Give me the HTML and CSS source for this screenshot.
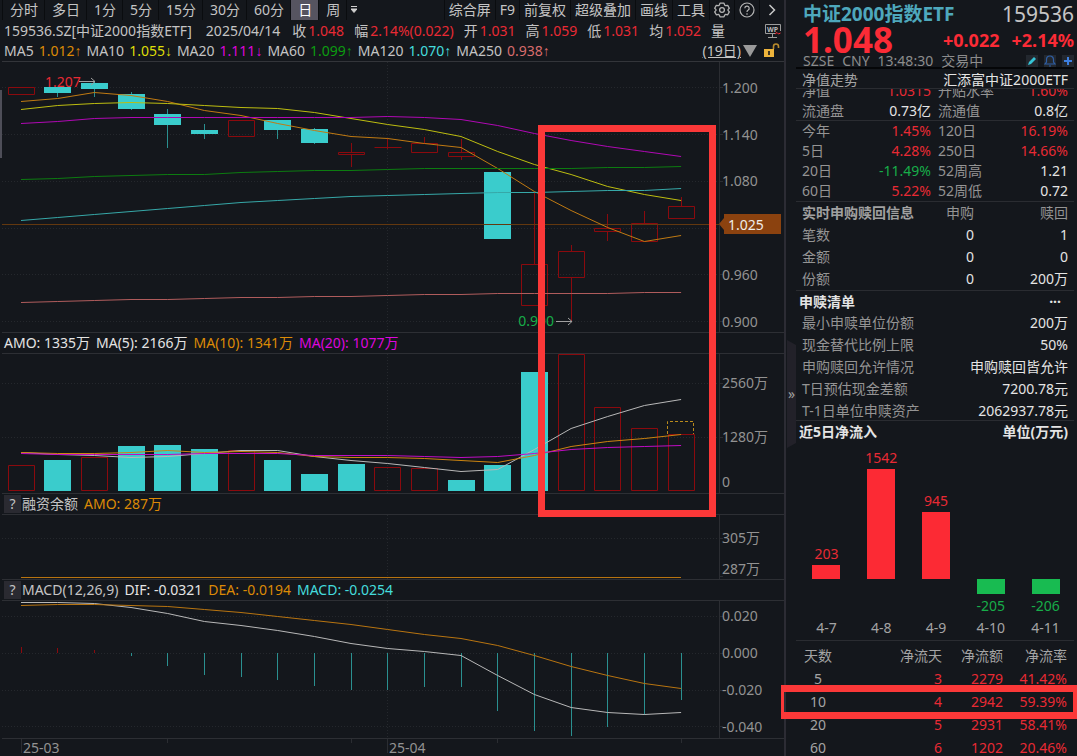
FILE: index.html
```html
<!DOCTYPE html>
<html lang="zh-CN">
  <head>
    <meta charset="UTF-8" />
    <meta name="viewport" content="width=device-width, initial-scale=1.0" />
    <title>159536.SZ 中证2000指数ETF</title>
    <link rel="stylesheet" href="styles.css">
  </head>
  <body>
    <div class="app">
      <main class="board">
        <nav class="toolbar">
          <button class="tab">分时</button>
          <button class="tab">多日</button>
          <button class="tab">1分</button>
          <button class="tab">5分</button>
          <button class="tab">15分</button>
          <button class="tab">30分</button>
          <button class="tab">60分</button>
          <button class="tab active">日</button>
          <button class="tab">周</button>
          <button class="tab more" aria-label="更多周期">
            <svg width="6" height="8" viewBox="0 0 6 8"><path d="M0 0.5h6M0 3h6L3 6.5z" fill="#d0d0d0" stroke="#d0d0d0" stroke-width="1" /></svg>
          </button>
          <div class="tools">
            <button class="tool">综合屏</button>
            <button class="tool">F9</button>
            <button class="tool">前复权</button>
            <button class="tool">超级叠加</button>
            <button class="tool">画线</button>
            <button class="tool">工具</button>
            <button class="tool icon" aria-label="设置">
              <svg width="16" height="16" viewBox="0 0 16 16" fill="none" stroke="#b4b4b4" stroke-width="1.3" stroke-linejoin="round">
                <path d="M6 1.2h4l.7 1.9 1 .6 2-.4 1.6 3L14 7.6v.8l1.3 1.5-1.6 2.9-2-.4-1 .6L10 14.8H6L5.3 13l-1-.6-2 .4L.7 9.9 2 8.4v-.8L.7 6.3l1.6-3 2 .4 1-.6z" />
                <circle cx="8" cy="8" r="2.4" />
              </svg>
            </button>
            <button class="tool icon" aria-label="帮助">
              <svg width="16" height="16" viewBox="0 0 16 16" fill="none" stroke="#b4b4b4" stroke-width="1.2">
                <circle cx="8" cy="8" r="7" />
                <path d="M5.8 6.3a2.2 2.2 0 1 1 3.2 2c-.8.4-1 .8-1 1.6M8 11.2v1.5" />
              </svg>
            </button>
            <button class="tool icon" aria-label="展开">
              <svg width="8" height="12" viewBox="0 0 8 12" fill="none" stroke="#c8c8c8" stroke-width="1.5"><path d="M1.5 1l5 5-5 5" /></svg>
            </button>
          </div>
        </nav>

        <div class="quote-line">
          <span class="code">159536.SZ[中证2000指数ETF]</span>
          <span class="date">2025/04/14</span>
          <span>收<b class="up">1.048</b></span>
          <span>幅<b class="up">2.14%(0.022)</b></span>
          <span>开<b class="up">1.031</b></span>
          <span>高<b class="up">1.059</b></span>
          <span>低<b class="up">1.031</b></span>
          <span>均<b class="up">1.052</b></span>
          <span>量</span>
          <svg class="wp" width="18" height="16" viewBox="0 0 18 16" fill="none" stroke="#9c9c9c">
            <path d="M16.500 8V1.500h-15v9h10" />
            <path d="M8.500 11v3M4 14.500h9" />
            <path d="M11 11l2-1.500 1.500 1.500 2-1" stroke="#fb2b36" />
            <text x="3" y="9" class="wp-text">WP</text>
          </svg>
        </div>

        <div class="ma-line">
          <span>MA5</span><span class="orange">1.012↑</span>
          <span>MA10</span><span class="yellow">1.055↓</span>
          <span>MA20</span><span class="magenta">1.111↓</span>
          <span>MA60</span><span class="green">1.099↑</span>
          <span>MA120</span><span class="cyan">1.070↑</span>
          <span>MA250</span><span class="pink">0.938↑</span>
          <div class="range">
            <a href="#">(19日)</a>
            <svg width="14" height="12" viewBox="0 0 14 12"><path d="M0 0h14L7 12z" fill="#9a9a9a" /></svg>
            <svg class="lock" width="17" height="16" viewBox="0 0 17 16">
              <rect x="1" y="6" width="10" height="8" fill="#edb43c" />
              <path d="M10.500 6V3.500a2.500 2.500 0 0 1 5 0V5" fill="none" stroke="#b98b2c" stroke-width="1.6" />
              <path d="M6 8v4" stroke="#14171c" stroke-width="1.6" />
            </svg>
          </div>
        </div>

        <div class="charts">
          <section class="pane">
            <div class="plot">
              <svg id="price" class="price" viewBox="2 62 717 270" preserveAspectRatio="none"></svg>
              <span class="note high">1.207</span>
              <span class="note low">0.900</span>
            </div>
            <svg class="axis price" viewBox="719 62 65 270">
              <path class="edge" d="M719.5 62v270M719 87.5h4M719 134.5h4M719 181.5h4M719 274.5h4M719 321.5h4" />
              <text x="722" y="93">1.200</text>
              <text x="722" y="140">1.140</text>
              <text x="722" y="186">1.080</text>
              <text x="722" y="280">0.960</text>
              <text x="722" y="327">0.900</text>
              <path class="tag" d="M719 224l5-6v-4h57v20h-57v-4z" />
              <text x="728" y="230" class="tag-text">1.025</text>
            </svg>
          </section>

          <header class="pane-head">
            <span class="white">AMO: 1335万</span>
            <span class="white">MA(5): 2166万</span>
            <span class="orange">MA(10): 1341万</span>
            <span class="magenta">MA(20): 1077万</span>
          </header>
          <section class="pane">
            <div class="plot">
              <svg id="volume" class="volume" viewBox="2 354 717 139" preserveAspectRatio="none"></svg>
            </div>
            <svg class="axis volume" viewBox="719 354 65 139">
              <path class="edge" d="M719.5 354v139M719 383.5h4M719 437.5h4" />
              <text x="722" y="388">2560万</text>
              <text x="722" y="442">1280万</text>
              <text x="722" y="487">0</text>
            </svg>
          </section>

          <header class="pane-head">
            <button class="help">?</button>
            <span>融资余额</span>
            <span class="orange">AMO: 287万</span>
          </header>
          <section class="pane">
            <div class="plot">
              <svg id="margin" class="margin" viewBox="2 515 717 64" preserveAspectRatio="none"></svg>
            </div>
            <svg class="axis margin" viewBox="719 515 65 64">
              <path class="edge" d="M719.5 515v64M719 538.5h4M719 576.5h4" />
              <text x="722" y="543">305万</text>
              <text x="722" y="574">287万</text>
            </svg>
          </section>

          <header class="pane-head">
            <button class="help">?</button>
            <span>MACD(12,26,9)</span>
            <span class="white">DIF: -0.0321</span>
            <span class="orange">DEA: -0.0194</span>
            <span class="cyan">MACD: -0.0254</span>
          </header>
          <section class="pane">
            <div class="plot">
              <svg id="macd" class="macd" viewBox="2 601 717 137" preserveAspectRatio="none"></svg>
            </div>
            <svg class="axis macd" viewBox="719 601 65 137">
              <path class="edge" d="M719.5 601v137M719 616.5h4M719 653.5h4M719 690.5h4M719 726.5h4" />
              <text x="722" y="621">0.020</text>
              <text x="722" y="658">0.000</text>
              <text x="722" y="695">-0.020</text>
              <text x="722" y="732">-0.040</text>
            </svg>
          </section>

          <footer class="time-axis">
            <svg class="ticks" viewBox="2 0 717 17" preserveAspectRatio="none">
              <path class="edge" d="M21.5 0v14M167.5 0v4M351.5 0v4M387.5 0v14M497.5 0v4M681.5 0v4" />
            </svg>
            <span class="month march">25-03</span>
            <span class="month april">25-04</span>
          </footer>

          <div class="mark mark-chart"></div>
        </div>
      </main>

      <aside class="side">
        <button class="collapse" aria-label="收起">»</button>

        <header class="summary">
          <div class="summary-row">
            <h1>中证2000指数ETF</h1>
            <span class="symbol">159536</span>
          </div>
          <div class="summary-row last-row">
            <strong class="last">1.048</strong>
            <span class="change"><b>+0.022</b><b>+2.14%</b></span>
          </div>
          <div class="status">
            <span>SZSE</span><span>CNY</span><span>13:48:30</span><span>交易中</span>
            <div class="status-icons">
              <button aria-label="编辑"><svg width="12" height="12" viewBox="0 0 12 12"><path d="M2 10l1-3 5-5 2 2-5 5z" fill="#35c3d6" /></svg></button>
              <button aria-label="提醒"><svg width="12" height="12" viewBox="0 0 12 12" fill="none" stroke="#2f5fa6" stroke-width="1.2"><path d="M1 9h10L9.500 7V4.500a3.500 3.500 0 0 0-7 0V7zM5 11h2" /></svg></button>
              <button aria-label="添加"><svg width="12" height="12" viewBox="0 0 12 12"><path d="M6 2v8M2 6h8" stroke="#3d7fe0" stroke-width="2" /></svg></button>
            </div>
          </div>
        </header>

        <div class="fund-line"><span>净值走势</span><span class="white">汇添富中证2000ETF</span></div>

        <div class="stats stats-clip">
          <div class="stat"><span>净值</span><b class="up">1.0315</b><span>升贴水率</span><b class="up">1.60%</b></div>
          <div class="stat"><span>流通盘</span><b>0.73亿</b><span>流通值</span><b>0.8亿</b></div>
        </div>
        <div class="stats">
          <div class="stat"><span>今年</span><b class="up">1.45%</b><span>120日</span><b class="up">16.19%</b></div>
          <div class="stat"><span>5日</span><b class="up">4.28%</b><span>250日</span><b class="up">14.66%</b></div>
          <div class="stat"><span>20日</span><b class="down">-11.49%</b><span>52周高</span><b>1.21</b></div>
          <div class="stat"><span>60日</span><b class="up">5.22%</b><span>52周低</span><b>0.72</b></div>
        </div>

        <table class="orders">
          <thead>
            <tr><th>实时申购赎回信息</th><td>申购</td><td>赎回</td></tr>
          </thead>
          <tbody>
            <tr><td>笔数</td><td>0</td><td>1</td></tr>
            <tr><td>金额</td><td>0</td><td>0</td></tr>
            <tr><td>份额</td><td>0</td><td>200万</td></tr>
          </tbody>
        </table>

        <section class="list">
          <h2>申赎清单 <button class="dots" aria-label="更多">···</button></h2>
          <dl>
            <div><dt>最小申赎单位份额</dt><dd>200万</dd></div>
            <div><dt>现金替代比例上限</dt><dd>50%</dd></div>
            <div><dt>申购赎回允许情况</dt><dd>申购赎回皆允许</dd></div>
            <div><dt>T日预估现金差额</dt><dd>7200.78元</dd></div>
            <div><dt>T-1日单位申赎资产</dt><dd>2062937.78元</dd></div>
          </dl>
        </section>

        <section class="flow">
          <h2>近5日净流入 <span>单位(万元)</span></h2>
          <div class="bars" id="bars"></div>
        </section>

        <table class="flow-table">
          <thead>
            <tr><th>天数</th><th>净流天</th><th>净流额</th><th>净流率</th></tr>
          </thead>
          <tbody>
            <tr><td>5</td><td>3</td><td>2279</td><td>41.42%</td></tr>
            <tr class="marked"><td>10<div class="mark mark-row"></div></td><td>4</td><td>2942</td><td>59.39%</td></tr>
            <tr><td>20</td><td>5</td><td>2931</td><td>58.41%</td></tr>
            <tr><td>60</td><td>6</td><td>1202</td><td>20.46%</td></tr>
          </tbody>
        </table>
      </aside>
    </div>

    <script src="chart.js"></script>
  </body>
</html>
```
FILE: styles.css
```css
* {
  box-sizing: border-box;
}

body {
  margin: 0;
  background-color: #14171c;
  color: #c4c4c4;
  font-family: 'Noto Sans', 'Liberation Sans', 'Noto Sans CJK SC', sans-serif;
  font-size: 14px;
  line-height: 20px;
}

button {
  padding: 0;
  border: none;
  background: none;
  color: inherit;
  font: inherit;
  cursor: pointer;
}

b {
  font-weight: 400;
}

svg {
  display: block;
}

h1,
h2,
dl,
dd {
  margin: 0;
}

.white { color: #e4e4e4; }
.orange { color: #dc8a06; }
.yellow { color: #dede08; }
.magenta { color: #dd06dd; }
.green { color: #0c9c10; }
.cyan { color: #44dcdc; }
.pink { color: #d86c6c; }
.up { color: #e82a34; }
.down { color: #17ad49; }

.app {
  display: grid;
  grid-template-columns: minmax(0, 1fr) 291px;
  height: 100vh;
  min-height: 756px;
  overflow: hidden;
}

/* Left board */
.board {
  padding-left: 2px;
  border-right: 2px solid #2c2c34;
  background: linear-gradient(#4e4e58, #4e4e58) 0 90px / 2px 68px no-repeat;
  min-width: 0;
}

.toolbar {
  display: flex;
  height: 20px;
  overflow: hidden;
}

.tab {
  padding: 0 7px;
  border-left: 1px solid #0a0c0f;
  margin-right: -1px;
  flex: none;
}

.tab.active {
  background-color: #565460;
  color: #fff;
}

.tab.more {
  padding: 0 4px;
}

.tools {
  display: flex;
  margin-left: auto;
}

.tool {
  padding: 0 4px;
  border-left: 1px solid #0a0c0f;
  white-space: nowrap;
}

.tool.icon {
  display: flex;
  align-items: center;
  justify-content: center;
  width: 25px;
}

.quote-line {
  display: flex;
  align-items: center;
  gap: 10px;
  height: 21px;
  padding-left: 2px;
  white-space: nowrap;
}

.quote-line span {
  display: flex;
  gap: 2px;
}

.quote-line .code {
  margin-right: 4px;
}

.quote-line .date {
  margin-right: 2px;
}

.quote-line .wp {
  margin-left: auto;
  margin-right: 2px;
}

.wp-text {
  font-size: 7px;
  font-weight: 700;
  fill: #b8b8b8;
  stroke: none;
}

.ma-line {
  display: flex;
  align-items: center;
  gap: 5px;
  height: 21px;
  padding-left: 2px;
  border-bottom: 1px solid #33353a;
  white-space: nowrap;
}

.range {
  display: flex;
  align-items: center;
  gap: 2px;
  margin-left: auto;
  padding-right: 4px;
}

.range a {
  color: inherit;
}

.range .lock {
  margin-left: 4px;
}

.charts {
  position: relative;
}

.pane {
  display: grid;
  grid-template-columns: minmax(0, 1fr) 65px;
}

.plot {
  position: relative;
}

.plot svg {
  width: 100%;
}

.price { height: 270px; }
.volume { height: 139px; }
.margin { height: 64px; }
.macd { height: 137px; }

.axis {
  width: 65px;
}

.axis text {
  fill: #929292;
}

.edge {
  fill: none;
  stroke: #2b2d32;
}

.axis .tag {
  fill: #8b420f;
}

.axis .tag-text {
  fill: #f0ece8;
}

.plot path,
.plot line,
.plot rect {
  vector-effect: non-scaling-stroke;
}

.grid {
  fill: none;
  stroke: #25282d;
  stroke-dasharray: 1 2;
}

.series {
  fill: none;
  stroke-width: 1;
}

.rise {
  fill: none;
  stroke: #8b0a0e;
}

.fall {
  fill: #3acccc;
}

.wick-fall {
  stroke: #2a9090;
}

.estimate {
  fill: none;
  stroke: #b88a1c;
  stroke-dasharray: 3 2;
}

.arrow {
  fill: none;
  stroke: #a0a0a0;
}

.note {
  position: absolute;
}

.note.high {
  top: 10px;
  left: 6%;
  color: #e82a34;
}

.note.low {
  top: 249px;
  right: 23%;
  color: #17ad49;
}

.pane-head {
  display: flex;
  align-items: center;
  gap: 6px;
  height: 22px;
  padding-left: 2px;
  border: solid #2d2f34;
  border-width: 1px 0;
  white-space: nowrap;
}

.help {
  width: 17px;
  height: 18px;
  margin-right: -5px;
  background-color: #2a2a31;
  line-height: 18px;
}

.time-axis {
  position: relative;
  height: 18px;
  padding-right: 65px;
  border-top: 1px solid #2d2f34;
}

.ticks {
  width: 100%;
  height: 17px;
}

.month {
  position: absolute;
  top: 1px;
  color: #929292;
  line-height: 16px;
}

.month.march { left: 21px; }
.month.april { left: 49.5%; }

.mark {
  position: absolute;
  border: 7px solid #fb3838;
  pointer-events: none;
}

.mark-chart {
  top: 63px;
  left: 68.5%;
  right: 68px;
  height: 392px;
}

/* Right panel */
.side {
  position: relative;
  min-width: 0;
  padding: 0 3px 0 10px;
}

.collapse {
  position: absolute;
  top: 340px;
  left: 1px;
  width: 9px;
  height: 108px;
  background-color: #222129;
  clip-path: polygon(0 0, 100% 5px, 100% 103px, 0 100%);
  color: #a0a0a0;
}

.summary {
  height: 69px;
  padding-left: 7px;
  border-bottom: 2px solid #050608;
}

.summary-row {
  display: flex;
  justify-content: space-between;
  align-items: center;
  height: 28px;
}

h1 {
  color: #4ea8bc;
  font-size: 19px;
  font-weight: 700;
}

.symbol {
  font-size: 21px;
}

.last-row {
  height: 24px;
  color: #fb2b36;
}

.last {
  font-size: 35px;
  font-weight: 700;
}

.change {
  display: flex;
  gap: 12px;
  font-size: 18px;
}

.change b {
  font-weight: 700;
}

.status {
  display: flex;
  gap: 8px;
  height: 17px;
  align-items: center;
  color: #8c8c8c;
}

.status-icons {
  display: flex;
  gap: 6px;
  margin-left: auto;
}

.status-icons button {
  background-color: #23282f;
}

.fund-line {
  display: flex;
  justify-content: space-between;
  height: 20px;
  padding: 0 6px;
  border-bottom: 1px solid #2a2c31;
  color: #a4a4a4;
  line-height: 22px;
}

.stats {
  padding: 0 6px;
  border-bottom: 1px solid #2a2c31;
}

/* list is scrolled part of a row down */
.stats-clip {
  display: flex;
  flex-direction: column;
  justify-content: flex-end;
  height: 32px;
  line-height: 22px;
  overflow: hidden;
}

.stat {
  display: grid;
  grid-template-columns: 1fr 1fr 1fr 1fr;
  flex: none;
  height: 20px;
  color: #949494;
}

.stat span {
  white-space: nowrap;
}

.stat b {
  text-align: right;
}

.stat b:nth-child(2) {
  margin-right: 4px;
}

.stat span:nth-child(3) {
  margin-left: 3px;
}

.stat b:not(.up):not(.down) {
  color: #e4e4e4;
}

table {
  width: 100%;
  border-collapse: collapse;
}

th,
td {
  padding: 0;
  text-align: right;
}

.orders {
  border-bottom: 1px solid #2a2c31;
  table-layout: fixed;
}

.orders tr {
  height: 22px;
}

.orders td,
.orders th {
  color: #e4e4e4;
}

.orders thead td,
.orders td:first-child {
  color: #949494;
}

.orders th {
  width: 122px;
  color: #a0a0a0;
  font-weight: 700;
}

.orders tr > :first-child {
  padding-left: 6px;
  text-align: left;
}

.orders tr > :nth-child(2) {
  width: 56px;
}

.orders tr > :last-child {
  padding-right: 6px;
}

h2 {
  display: flex;
  justify-content: space-between;
  height: 21px;
  padding: 0 6px 0 3px;
  color: #e4e4e4;
  font-size: 14px;
  font-weight: 700;
  line-height: 22px;
}

.dots {
  margin-right: 7px;
}

.list dl {
  height: 109px;
  border-bottom: 1px solid #2a2c31;
}

.list dl div {
  display: flex;
  justify-content: space-between;
  height: 22px;
  padding: 0 6px;
  line-height: 22px;
}

.list dt {
  color: #949494;
}

.list dd {
  color: #e4e4e4;
}

.bars {
  display: grid;
  grid-template-columns: repeat(5, 1fr);
  border-bottom: 1px solid #2a2c31;
  padding: 0 1px 0 3px;
}

.bar-col {
  display: grid;
  grid-template-rows: 137px 39px 22px;
  justify-items: center;
  color: #a4a4a4;
}

.bar-up {
  align-self: end;
}

.bar-fill {
  width: 28px;
  margin: 0 auto;
}

.bar-up .bar-fill {
  background-color: #fc2a34;
}

.bar-down .bar-fill {
  background-color: #18bb51;
}

.bar-value {
  text-align: center;
}

.bar-up .bar-value {
  margin-bottom: 1px;
}

.bar-down .bar-value {
  margin-top: 2px;
}

.flow-table {
  margin-top: 4px;
  line-height: 16px;
}

.flow-table tr {
  height: 23px;
}

.flow-table th {
  color: #a4a4a4;
  font-weight: 400;
}

.flow-table td {
  color: #e82a34;
}

.flow-table tr > :first-child {
  width: 44px;
  color: #a4a4a4;
  text-align: center;
}

.flow-table tr > :nth-child(3) {
  width: 61px;
}

.flow-table tr > :last-child {
  width: 71px;
  padding-right: 7px;
}

.marked {
  position: relative;
}

.mark-row {
  top: -6px;
  left: -15px;
  right: -3px;
  height: 34px;
  border-left-width: 3px;
  border-right-width: 4px;
}
```
FILE: chart.js
```js
const STEP = 36.67;
const FIRST = 21;
const WIDTH = 27;

// x of the centre of day i
const dayX = (i) => FIRST + STEP * i;
const snap = (x) => Math.floor(x) + 0.5;

// [direction, top, bottom, high, low]
const candles = [
  ['up', 87, 94, 87, 95], ['down', 87, 93, 87, 97], ['down', 83, 89, 81, 97],
  ['down', 94, 109, 92, 110], ['down', 114, 125, 109, 148], ['down', 130, 134, 124, 139],
  ['up', 120, 136, 120, 136], ['down', 120, 130, 120, 139], ['down', 129, 143, 128, 144],
  ['up', 152, 154, 143, 167], ['up', 147, 147, 138, 149], ['up', 143, 152, 137, 152],
  ['up', 152, 156, 139, 160], ['down', 172, 239, 172, 239], ['up', 264, 305, 192, 305],
  ['up', 251, 277, 245, 321], ['up', 228, 231, 214, 241], ['up', 223, 241, 211, 241],
  ['up', 206, 218, 197, 218]
];

const volumes = [
  ['up', 465], ['down', 460], ['up', 457], ['down', 446], ['down', 445], ['down', 449], ['up', 450],
  ['down', 460], ['down', 474], ['down', 464], ['up', 467], ['up', 468], ['down', 480], ['down', 465],
  ['down', 372], ['up', 354], ['up', 407], ['up', 428], ['up', 434]
];

const macdBars = [647, 648, 650, 656, 666, 675, 677, 680, 686, 690, 690, 687, 687, 711, 731, 736, 727, 715, 700];

const priceLines = {
  '#c07a12': [101, 98, 92, 95, 101, 110, 115, 123, 130, 136, 138, 143, 147, 168, 191, 210, 227, 241, 235],
  '#bdbd10': [109, 105, 103, 102, 103, 105, 107, 108, 112, 118, 124, 129, 136, 151, 164, 174, 186, 194, 200],
  '#b008b4': [123, 121, 118, 117, 117, 117, 117, 117, 117, 117, 116, 117, 119, 125, 133, 140, 146, 151, 156],
  '#0c7c10': [179, 178, 176, 175, 174, 174, 172, 171, 170, 170, 169, 168, 168, 168, 168, 168, 167, 167, 166],
  '#36a8a8': [220, 217, 214, 211, 208, 205, 202, 200, 198, 196, 195, 194, 193, 192, 192, 191, 190, 190, 188],
  '#b05c5c': [302, 301, 300, 299, 299, 298, 297, 297, 296, 296, 295, 294, 294, 293, 293, 293, 293, 292, 292]
};

const volumeLines = {
  '#b8b8b8': [452, 454, 455, 457, 456, 453, 450, 450, 456, 460, 463, 467, 471, 469, 449, 428, 416, 405, 399],
  '#cc8410': [452, 453, 453, 452, 450, 452, 451, 452, 456, 457, 457, 458, 460, 462, 455, 446, 441, 438, 434],
  '#c00cc4': [453, 454, 454, 454, 454, 453, 453, 453, 455, 455, 455, 456, 457, 456, 453, 449, 447, 446, 445]
};

const macdLines = {
  '#b8b8b8': [602, 602, 603, 607, 613, 621, 625, 630, 636, 643, 648, 651, 655, 675, 694, 707, 712, 714, 712],
  '#b87410': [605, 604, 604, 605, 606, 609, 612, 616, 620, 624, 629, 634, 638, 645, 655, 666, 675, 683, 688]
};

const flows = [
  { day: '4-7', value: 203, height: 14 },
  { day: '4-8', value: 1542, height: 110 },
  { day: '4-9', value: 945, height: 67 },
  { day: '4-10', value: -205, height: 15 },
  { day: '4-11', value: -206, height: 15 }
];

function grid(rows, top, bottom) {
  const lines = rows.map((y) => `M2 ${y + 0.5}H719`).join('');
  return `<path class="grid" d="${lines}M387.5 ${top}V${bottom}" />`;
}

function series(lines) {
  return Object.entries(lines)
    .map(([color, ys]) => {
      const d = ys.map((y, i) => `${i ? 'L' : 'M'}${dayX(i).toFixed(1)} ${y + 0.5}`).join('');
      return `<path class="series" stroke="${color}" d="${d}" />`;
    })
    .join('');
}

function box(dir, i, top, bottom) {
  const left = Math.round(dayX(i) - WIDTH / 2);
  if (dir === 'up') {
    return `<rect class="rise" x="${left + 0.5}" y="${top + 0.5}" width="${WIDTH - 1}" height="${bottom - top}" />`;
  }
  return `<rect class="fall" x="${left}" y="${top}" width="${WIDTH}" height="${bottom - top}" />`;
}

function candle([dir, top, bottom, high, low], i) {
  const x = snap(dayX(i));
  const cls = dir === 'up' ? 'rise' : 'wick-fall';
  const body = top === bottom
    ? `<path class="rise" d="M${x - 13} ${top + 0.5}h${WIDTH}" />`
    : box(dir, i, top, bottom);
  return `<path class="${cls}" d="M${x} ${high}V${top}M${x} ${bottom}V${low}" />${body}`;
}

document.getElementById('price').innerHTML =
  grid([87, 134, 181, 228, 274, 321], 62, 332) +
  candles.map(candle).join('') +
  '<path stroke="#63380f" d="M2 224.5H719" />' +
  series(priceLines) +
  '<path class="arrow" d="M79 81.5h16M91 78l4 3.5-4 3.5M556 321.5h16M568 318l4 3.5-4 3.5" />';

document.getElementById('volume').innerHTML =
  grid([383, 437], 354, 493) +
  volumes.map(([dir, top], i) => box(dir, i, top, dir === 'up' ? 490 : 491)).join('') +
  '<path class="estimate" d="M667.5 434V421.5H693.5V434" />' +
  series(volumeLines);

document.getElementById('margin').innerHTML =
  grid([538], 515, 579) + '<path stroke="#b87410" d="M21 577.5H681" />';

document.getElementById('macd').innerHTML =
  grid([616, 653, 690, 726], 601, 738) +
  macdBars
    .map((y, i) => `<path class="${y < 653 ? 'rise' : 'wick-fall'}" d="M${snap(dayX(i))} 653V${y}" />`)
    .join('') +
  series(macdLines);

document.getElementById('bars').innerHTML = flows
  .map(({ day, value, height }) => {
    const label = `<div class="bar-value ${value > 0 ? 'up' : 'down'}">${value}</div>`;
    const fill = `<div class="bar-fill" style="height: ${height}px"></div>`;
    const up = value > 0 ? `<div class="bar-up">${label}${fill}</div>` : '<div></div>';
    const down = value < 0 ? `<div class="bar-down">${fill}${label}</div>` : '<div></div>';
    return `<div class="bar-col">${up}${down}<span>${day}</span></div>`;
  })
  .join('');
```
